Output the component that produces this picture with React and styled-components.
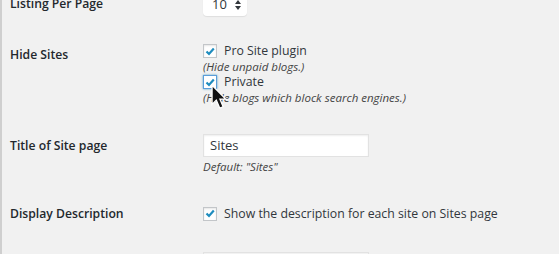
import React from "react"
import styled, { createGlobalStyle } from "styled-components"

const GlobalStyle = createGlobalStyle`
  html, body {
    margin: 0;
    padding: 0;
    background: #f1f1f1;
    overflow: hidden;
  }
  body {
    font-family: "Open Sans", "Liberation Sans", sans-serif;
    color: #32373c;
  }
`

const Page = styled.div`
  position: relative;
  width: 559px;
  height: 254px;
  box-sizing: border-box;
  border-left: 2px solid #cfcfcf;
  overflow: hidden;
`

const Table = styled.div`
  margin-top: -6px;
  padding-left: 8px;
  display: flex;
  flex-direction: column;
`

const Row = styled.div`
  display: grid;
  grid-template-columns: 193px 1fr;
  align-items: start;
  margin-top: ${props => props.gap || 0}px;
`

const Label = styled.div`
  font-size: 12.2px;
  font-weight: 600;
  color: #23282d;
  line-height: 16px;
  padding-top: ${props => props.offset || 0}px;
`

const Field = styled.div`
  display: flex;
  flex-direction: column;
  font-size: 12.3px;
  line-height: 15.5px;
`

const Select = styled.div`
  width: 44px;
  height: 22px;
  box-sizing: border-box;
  background: #fff;
  border-radius: 4px;
  box-shadow: 0 1px 1px rgba(0, 0, 0, 0.08);
  display: flex;
  align-items: center;
  padding: 0 6px 0 9px;
  justify-content: space-between;
  font-size: 13px;
  color: #32373c;
`

const CheckLine = styled.label`
  display: flex;
  align-items: center;
  gap: 7px;
  height: ${props => props.h || 15.5}px;
  font-size: 12.3px;
  color: #32373c;
`

const Box = styled.span`
  width: 14px;
  height: 14px;
  box-sizing: border-box;
  border: 1px solid ${props => props.focus ? "#5b9dd9" : "#c3c6c9"};
  box-shadow: ${props => props.focus ? "0 0 2px rgba(30,140,190,.8)" : "inset 0 1px 2px rgba(0,0,0,.1)"};
  background: #fff;
  display: flex;
  align-items: center;
  justify-content: center;
  flex-shrink: 0;
`

const Desc = styled.div`
  font-style: italic;
  font-size: 11.5px;
  color: #444;
  line-height: ${props => props.lh || 15.5}px;
  margin-top: ${props => props.top || 0}px;
`

const TextInput = styled.div`
  width: 166px;
  height: 23px;
  box-sizing: border-box;
  background: #fff;
  border: 1px solid #e2e2e2;
  box-shadow: inset 0 1px 2px rgba(0, 0, 0, 0.07);
  display: flex;
  align-items: center;
  padding-left: 6px;
  font-size: 13px;
  color: #32373c;
`

const Cursor = styled.svg`
  position: absolute;
  left: 209px;
  top: 84px;
`

function Check({ focus }) {
  return (
    <Box focus={focus}>
      <svg width="10" height="9" viewBox="0 0 10 9">
        <path d="M1.5 4.5 L4 7 L8.8 1.5" fill="none" stroke="#1e8cbe" strokeWidth="2.2" />
      </svg>
    </Box>
  )
}

function Arrows() {
  return (
    <svg width="6" height="10" viewBox="0 0 6 10">
      <path d="M3 0 L6 4 H0 Z M3 10 L0 6 H6 Z" fill="#32373c" />
    </svg>
  )
}

export default function App() {
  return (
    <Page>
      <GlobalStyle />
      <Table>
        <Row>
          <Label offset={2}>Listing Per Page</Label>
          <Field>
            <Select>10 <Arrows /></Select>
          </Field>
        </Row>
        <Row gap={27.25}>
          <Label offset={3.75}>Hide Sites</Label>
          <Field>
            <CheckLine><Check />Pro Site plugin</CheckLine>
            <Desc>(Hide unpaid blogs.)</Desc>
            <CheckLine><Check focus />Private</CheckLine>
            <Desc>(Hide blogs which block search engines.)</Desc>
          </Field>
        </Row>
        <Row gap={28.75}>
          <Label offset={4}>Title of Site page</Label>
          <Field>
            <TextInput>Sites</TextInput>
            <Desc top={2} lh={16}>Default: "Sites"</Desc>
          </Field>
        </Row>
        <Row gap={30.5}>
          <Label offset={0}>Display Description</Label>
          <Field>
            <CheckLine h={16}><Check />Show the description for each site on Sites page</CheckLine>
          </Field>
        </Row>
        <Row gap={30.5}>
          <Label />
          <Field>
            <TextInput />
          </Field>
        </Row>
      </Table>
      <Cursor width="17" height="27" viewBox="0 0 16 25">
        <path d="M1 1 L1 19 L5 15 L8.2 22.5 L11.4 21.2 L8.4 14 L13.8 14 Z" fill="#111" stroke="#fff" strokeWidth="1.2" />
      </Cursor>
    </Page>
  )
}
